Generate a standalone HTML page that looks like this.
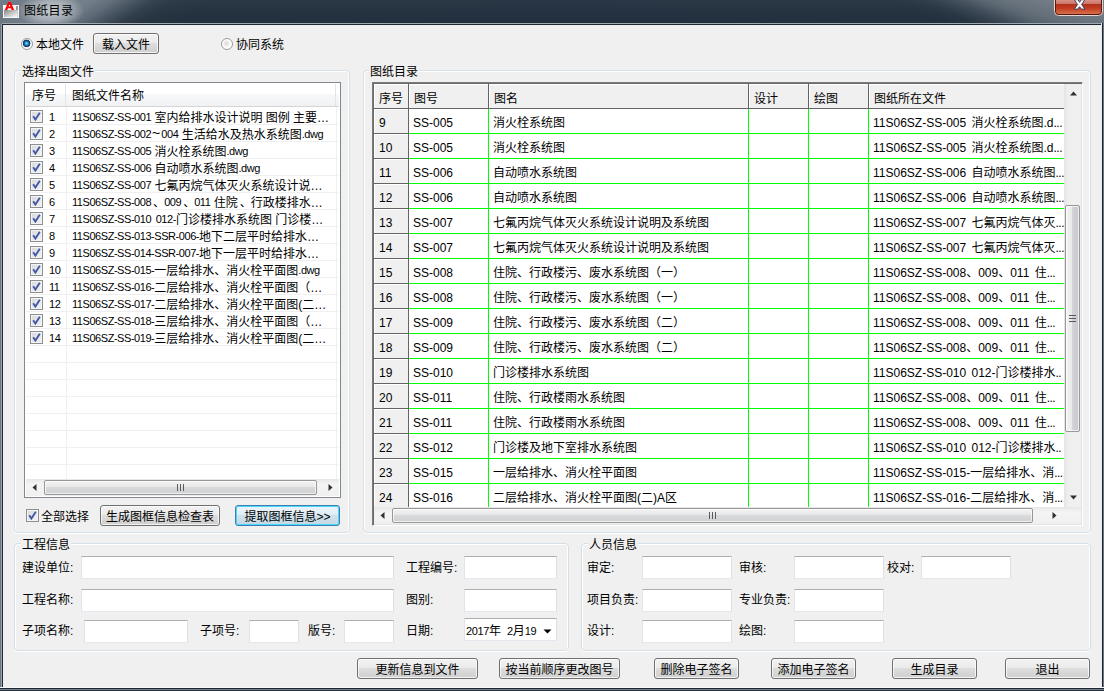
<!DOCTYPE html><html lang="zh-CN"><head><meta charset="utf-8"><title>图纸目录</title><style>
*{box-sizing:border-box;margin:0;padding:0}
html,body{width:1104px;height:691px;overflow:hidden;background:#f0f0f0}
body{position:relative;font-family:"Liberation Sans","Noto Sans CJK SC",sans-serif;font-size:12px;color:#000;line-height:14px}
.a{position:absolute;white-space:nowrap}
#tb{left:0;top:0;width:552px;height:25px;background:linear-gradient(144.8deg,#6c7884 3.01%,#76828d 11.53%,#6c7884 16.29%,#5f6b78 19.19%,#4d5966 21.74%,#3f4c59 23.78%,#303d4a 26.34%,#283542 29.74%,#243240 35.36%,#233140 96.99%)}
#tb2{left:552px;top:0;width:552px;height:25px;background:linear-gradient(23.6deg,#233140 4.69%,#243240 65.75%,#293643 70.01%,#34414e 73.30%,#404c59 75.92%,#4d5965 78.22%,#5a6671 80.85%,#656f7a 84.13%,#6c7781 89.71%,#707b85 95.29%)}
#tbs{left:0;top:0;width:1104px;height:25px;background:linear-gradient(180deg,rgba(255,255,255,.03) 0,rgba(255,255,255,0) 60%,rgba(0,0,0,.04) 100%)}
#fl{left:0;top:24px;width:3px;height:667px;background:linear-gradient(90deg,#6a7681 0,#6a7681 1px,#9da6ae 1px,#9da6ae 2px,#1f2a35 2px)}
#fr{left:1101px;top:23px;width:3px;height:668px;background:linear-gradient(90deg,#e8e8e8 0,#e8e8e8 1px,#1f2730 1px,#1f2730 2px,#6c7680 2px)}
#ft{left:2px;top:23px;width:1100px;height:2px;background:linear-gradient(180deg,#a0a8af 0,#a0a8af 1px,#1f2730 1px)}
#fb{left:0;top:687px;width:1104px;height:4px;background:linear-gradient(180deg,#f8f8f8 0,#f8f8f8 1px,#1c2733 1px,#1c2733 2px,#727e89 2px,#727e89 3px,#27323e 3px)}
#ttl{left:24px;top:4px;font-size:12px;line-height:14px;color:#000;letter-spacing:.3px}
.gb{border:1px solid #d5dfe5;border-radius:4px;box-shadow:inset 1px 1px 0 #fff,inset -1px 0 0 #fff,0 1px 0 #fff}
.gl{background:#f0f0f0;padding:0 1px;line-height:14px}
.btn{border:1px solid #707070;border-radius:3px;background:linear-gradient(180deg,#f2f2f2 0,#ebebeb 45%,#dddddd 50%,#cfcfcf 100%);box-shadow:inset 0 0 0 1px rgba(255,255,255,.75);text-align:center;line-height:19px;height:21px;padding-top:2px}
.btn.def{border-color:#3c7fb1;box-shadow:inset 0 0 0 1px #48d8fb;background:linear-gradient(180deg,#ecf4f9 0,#e0edf5 45%,#d0e1eb 50%,#c4d8e3 100%)}
.in{background:#fff;border:1px solid #e3e9ef;border-top-color:#abadb3;border-left-color:#e2e3ea;border-right-color:#dbdfe6;height:22px}
.lbl{line-height:14px}
.radio{width:12px;height:12px;border-radius:50%;border:1px solid #9b9b9b;background:radial-gradient(circle at 45% 45%,#dddddd 0,#ececec 2.6px,#fdfdfd 3.6px,#fff 5px)}
.radio.on{background:radial-gradient(circle at 46% 44%,#a5e8fa 0,#36aee3 1px,#1f86c4 1.9px,#164872 2.7px,#143c62 3.5px,#f1f1f1 4.1px,#fbfbfb 5px)}
.cb{width:13px;height:13px;border:1px solid #8e8f8f;background:linear-gradient(135deg,#d6d9dc 0,#f3f3f3 100%);box-shadow:inset 0 0 0 1px #f4f4f4}
.cb svg{position:absolute;left:1px;top:1px;width:9px;height:9px}
#lv{left:24px;top:82px;width:317px;height:416px;border:1px solid #828790;background:#fff;overflow:hidden}
#lvh{left:1px;top:1px;width:313px;height:23px;background:linear-gradient(180deg,#fff 0,#fff 45%,#f7f8fa 46%,#f1f2f4 100%);border-bottom:1px solid #d5d5d5}
.lr{left:1px;width:313px;height:17px;border-bottom:1px solid #f0f0f0}
.lt,.ln{font-size:11px;letter-spacing:-.45px}
.lt{position:relative;top:-1px;word-spacing:2px}
.dn{position:relative;left:2px;margin-right:1px}
.tl{font-size:14px;letter-spacing:0;line-height:0;margin:0 1px}
.sbh{background:linear-gradient(180deg,#e6e6e6 0,#f4f4f4 30%,#f0f0f0 100%)}
.thumb{border:1px solid #979797;border-radius:2px;background:linear-gradient(180deg,#f3f3f3 0,#e8e8ea 45%,#d9dadc 50%,#cfd0d3 100%);box-shadow:inset 0 0 0 1px rgba(255,255,255,.7)}
#gr{left:372px;top:82px;width:711px;height:444px;background:#fff;border:1px solid #7c7c7c;border-right-color:#fff;border-bottom-color:#fff;box-shadow:inset 1px 1px 0 #696969,inset -1px -1px 0 #e3e3e3;overflow:hidden}
.gh{background:#f0f0f0;border-right:1px solid #646464;border-bottom:1px solid #646464;box-shadow:inset 1px 1px 0 #fff;font-size:12px;line-height:14px;padding:8px 0 0 5px;height:25px}
.gc{border-right:1px solid #00ff00;border-bottom:1px solid #00ff00;height:25px;font-size:12px;line-height:14px;padding:7px 0 0 4px;overflow:hidden}
.gn{font-size:12px}
.dd{letter-spacing:-.5px}
</style></head><body>
<div class="a" id="tb"></div><div class="a" id="tb2"></div><div class="a" id="tbs"></div>
<div class="a" style="left:18px;top:-6px;width:66px;height:34px;background:radial-gradient(ellipse at center,rgba(255,255,255,.55) 0,rgba(255,255,255,.35) 40%,rgba(255,255,255,0) 72%)"></div>
<svg class="a" style="left:0;top:0" width="22" height="20" viewBox="0 0 22 20"><defs><linearGradient id="ig" x1="0" y1="0" x2="1" y2="1"><stop offset="0" stop-color="#858585"/><stop offset=".55" stop-color="#c9c9c9"/><stop offset="1" stop-color="#fbfbfb"/></linearGradient></defs><rect x="3" y="5" width="16" height="13" fill="#f6f6f6"/><rect x="4" y="10" width="13" height="7" fill="url(#ig)"/><rect x="16" y="6" width="2" height="4" fill="#9a9a9a"/><rect x="17" y="10" width="1" height="7" fill="#d4d4d4"/><path d="M4.8 10 L8.2 1.9 L10.8 1.9 L14.2 10 L11.7 10 L11 8.3 L8 8.3 L7.3 10 Z M8.6 6.6 L10.4 6.6 L9.5 4.1 Z" fill="#ff0000" fill-rule="evenodd"/></svg>
<div class="a" id="ttl">图纸目录</div>
<svg class="a" style="left:1054px;top:0" width="49" height="17" viewBox="0 0 49 17"><defs><linearGradient id="cg" x1="0" y1="0" x2="0" y2="1"><stop offset="0" stop-color="#de9687"/><stop offset=".34" stop-color="#c8756a"/><stop offset=".35" stop-color="#b2301c"/><stop offset=".6" stop-color="#c23a20"/><stop offset="1" stop-color="#d4714c"/></linearGradient></defs><path d="M0.5 -1 L0.5 11.5 Q0.5 15.5 4.5 15.5 L44.5 15.5 Q48.5 15.5 48.5 11.5 L48.5 -1 Z" fill="#5a1a10" stroke="#e4d6d3" stroke-width="1"/><path d="M2 -1 L2 11 Q2 14 5 14 L44 14 Q47 14 47 11 L47 -1 Z" fill="url(#cg)"/><path d="M20.3 -0.3 L23.8 -0.3 L25.6 2.3 L27.4 -0.3 L30.9 -0.3 L27.6 4.5 L30.9 9.1 L27.4 9.1 L25.6 6.7 L23.8 9.1 L20.3 9.1 L23.6 4.5 Z" fill="#fff" stroke="#3e4460" stroke-width="1" stroke-linejoin="round"/></svg>
<div class="a" id="ft"></div><div class="a" id="fl"></div><div class="a" id="fr"></div><div class="a" id="fb"></div>
<div class="a radio on" style="left:21px;top:38px"></div>
<div class="a lbl" style="left:36px;top:38px;">本地文件</div>
<div class="a btn" style="left:93px;top:33px;width:66px">载入文件</div>
<div class="a radio" style="left:221px;top:38px"></div>
<div class="a lbl" style="left:236px;top:38px;">协同系统</div>
<div class="a gb" style="left:14px;top:70px;width:336px;height:463px"></div>
<div class="a gl" style="left:21px;top:65px">选择出图文件</div>
<div class="a gb" style="left:363px;top:70px;width:728px;height:463px"></div>
<div class="a gl" style="left:369px;top:65px">图纸目录</div>
<div class="a gb" style="left:14px;top:543px;width:555px;height:108px"></div>
<div class="a gl" style="left:21px;top:538px">工程信息</div>
<div class="a gb" style="left:581px;top:543px;width:510px;height:108px"></div>
<div class="a gl" style="left:588px;top:538px">人员信息</div>
<div class="a" id="lv">
<div class="a" id="lvh"></div>
<div class="a" style="left:40px;top:1px;width:1px;height:22px;background:#e2e4e9"></div>
<div class="a" style="left:310px;top:1px;width:1px;height:22px;background:#e2e4e9"></div>
<div class="a" style="left:7px;top:6px">序号</div><div class="a" style="left:47px;top:6px">图纸文件名称</div>
<div class="a lr" style="top:25px"></div>
<div class="a lr" style="top:42px"></div>
<div class="a lr" style="top:59px"></div>
<div class="a lr" style="top:76px"></div>
<div class="a lr" style="top:93px"></div>
<div class="a lr" style="top:110px"></div>
<div class="a lr" style="top:127px"></div>
<div class="a lr" style="top:144px"></div>
<div class="a lr" style="top:161px"></div>
<div class="a lr" style="top:178px"></div>
<div class="a lr" style="top:195px"></div>
<div class="a lr" style="top:212px"></div>
<div class="a lr" style="top:229px"></div>
<div class="a lr" style="top:246px"></div>
<div class="a lr" style="top:263px"></div>
<div class="a lr" style="top:280px"></div>
<div class="a lr" style="top:297px"></div>
<div class="a lr" style="top:314px"></div>
<div class="a lr" style="top:331px"></div>
<div class="a lr" style="top:348px"></div>
<div class="a lr" style="top:365px"></div>
<div class="a" style="left:41px;top:24px;width:1px;height:372px;background:#f0f0f0"></div>
<div class="a" style="left:311px;top:24px;width:1px;height:372px;background:#f0f0f0"></div>
<div class="a cb" style="left:5px;top:27px"><svg viewBox="0 0 9 9"><path d="M1.2 4.2 L3.4 7.6 L7.8 0.8" fill="none" stroke="#3f55a6" stroke-width="1.8" stroke-linecap="butt"/></svg></div>
<div class="a ln" style="left:24px;top:27px">1</div>
<div class="a" style="left:47px;top:28px"><span class="lt">11S06SZ-SS-001</span> 室内给排水设计说明 图例 主要…</div>
<div class="a cb" style="left:5px;top:44px"><svg viewBox="0 0 9 9"><path d="M1.2 4.2 L3.4 7.6 L7.8 0.8" fill="none" stroke="#3f55a6" stroke-width="1.8" stroke-linecap="butt"/></svg></div>
<div class="a ln" style="left:24px;top:44px">2</div>
<div class="a" style="left:47px;top:45px"><span class="lt">11S06SZ-SS-002<span class="tl">~</span>004</span> 生活给水及热水系统图<span class="lt">.dwg</span></div>
<div class="a cb" style="left:5px;top:61px"><svg viewBox="0 0 9 9"><path d="M1.2 4.2 L3.4 7.6 L7.8 0.8" fill="none" stroke="#3f55a6" stroke-width="1.8" stroke-linecap="butt"/></svg></div>
<div class="a ln" style="left:24px;top:61px">3</div>
<div class="a" style="left:47px;top:62px"><span class="lt">11S06SZ-SS-005</span> 消火栓系统图<span class="lt">.dwg</span></div>
<div class="a cb" style="left:5px;top:78px"><svg viewBox="0 0 9 9"><path d="M1.2 4.2 L3.4 7.6 L7.8 0.8" fill="none" stroke="#3f55a6" stroke-width="1.8" stroke-linecap="butt"/></svg></div>
<div class="a ln" style="left:24px;top:78px">4</div>
<div class="a" style="left:47px;top:79px"><span class="lt">11S06SZ-SS-006</span> 自动喷水系统图<span class="lt">.dwg</span></div>
<div class="a cb" style="left:5px;top:95px"><svg viewBox="0 0 9 9"><path d="M1.2 4.2 L3.4 7.6 L7.8 0.8" fill="none" stroke="#3f55a6" stroke-width="1.8" stroke-linecap="butt"/></svg></div>
<div class="a ln" style="left:24px;top:95px">5</div>
<div class="a" style="left:47px;top:96px"><span class="lt">11S06SZ-SS-007</span> 七氟丙烷气体灭火系统设计说…</div>
<div class="a cb" style="left:5px;top:112px"><svg viewBox="0 0 9 9"><path d="M1.2 4.2 L3.4 7.6 L7.8 0.8" fill="none" stroke="#3f55a6" stroke-width="1.8" stroke-linecap="butt"/></svg></div>
<div class="a ln" style="left:24px;top:112px">6</div>
<div class="a" style="left:47px;top:113px"><span class="lt">11S06SZ-SS-008</span><span class="dn">、</span><span class="lt">009</span><span class="dn">、</span><span class="lt">011</span> 住院<span class="dn">、</span>行政楼排水…</div>
<div class="a cb" style="left:5px;top:129px"><svg viewBox="0 0 9 9"><path d="M1.2 4.2 L3.4 7.6 L7.8 0.8" fill="none" stroke="#3f55a6" stroke-width="1.8" stroke-linecap="butt"/></svg></div>
<div class="a ln" style="left:24px;top:129px">7</div>
<div class="a" style="left:47px;top:130px"><span class="lt">11S06SZ-SS-010 012-</span>门诊楼排水系统图 门诊楼…</div>
<div class="a cb" style="left:5px;top:146px"><svg viewBox="0 0 9 9"><path d="M1.2 4.2 L3.4 7.6 L7.8 0.8" fill="none" stroke="#3f55a6" stroke-width="1.8" stroke-linecap="butt"/></svg></div>
<div class="a ln" style="left:24px;top:146px">8</div>
<div class="a" style="left:47px;top:147px"><span class="lt">11S06SZ-SS-013-SSR-006-</span>地下二层平时给排水…</div>
<div class="a cb" style="left:5px;top:163px"><svg viewBox="0 0 9 9"><path d="M1.2 4.2 L3.4 7.6 L7.8 0.8" fill="none" stroke="#3f55a6" stroke-width="1.8" stroke-linecap="butt"/></svg></div>
<div class="a ln" style="left:24px;top:163px">9</div>
<div class="a" style="left:47px;top:164px"><span class="lt">11S06SZ-SS-014-SSR-007-</span>地下一层平时给排水…</div>
<div class="a cb" style="left:5px;top:180px"><svg viewBox="0 0 9 9"><path d="M1.2 4.2 L3.4 7.6 L7.8 0.8" fill="none" stroke="#3f55a6" stroke-width="1.8" stroke-linecap="butt"/></svg></div>
<div class="a ln" style="left:24px;top:180px">10</div>
<div class="a" style="left:47px;top:181px"><span class="lt">11S06SZ-SS-015-</span>一层给排水、消火栓平面图<span class="lt">.dwg</span></div>
<div class="a cb" style="left:5px;top:197px"><svg viewBox="0 0 9 9"><path d="M1.2 4.2 L3.4 7.6 L7.8 0.8" fill="none" stroke="#3f55a6" stroke-width="1.8" stroke-linecap="butt"/></svg></div>
<div class="a ln" style="left:24px;top:197px">11</div>
<div class="a" style="left:47px;top:198px"><span class="lt">11S06SZ-SS-016-</span>二层给排水、消火栓平面图（…</div>
<div class="a cb" style="left:5px;top:214px"><svg viewBox="0 0 9 9"><path d="M1.2 4.2 L3.4 7.6 L7.8 0.8" fill="none" stroke="#3f55a6" stroke-width="1.8" stroke-linecap="butt"/></svg></div>
<div class="a ln" style="left:24px;top:214px">12</div>
<div class="a" style="left:47px;top:215px"><span class="lt">11S06SZ-SS-017-</span>二层给排水、消火栓平面图(二…</div>
<div class="a cb" style="left:5px;top:231px"><svg viewBox="0 0 9 9"><path d="M1.2 4.2 L3.4 7.6 L7.8 0.8" fill="none" stroke="#3f55a6" stroke-width="1.8" stroke-linecap="butt"/></svg></div>
<div class="a ln" style="left:24px;top:231px">13</div>
<div class="a" style="left:47px;top:232px"><span class="lt">11S06SZ-SS-018-</span>三层给排水、消火栓平面图（…</div>
<div class="a cb" style="left:5px;top:248px"><svg viewBox="0 0 9 9"><path d="M1.2 4.2 L3.4 7.6 L7.8 0.8" fill="none" stroke="#3f55a6" stroke-width="1.8" stroke-linecap="butt"/></svg></div>
<div class="a ln" style="left:24px;top:248px">14</div>
<div class="a" style="left:47px;top:249px"><span class="lt">11S06SZ-SS-019-</span>三层给排水、消火栓平面图(二…</div>
<div class="a sbh" style="left:1px;top:396px;width:313px;height:17px"></div>
<div class="a thumb" style="left:19px;top:397px;width:273px;height:15px"></div>
<div class="a" style="left:152px;top:401px;width:7px;height:7px;background:repeating-linear-gradient(90deg,#5a5a5a 0,#5a5a5a 1px,transparent 1px,transparent 3px)"></div>
<svg class="a" style="left:7px;top:401px" width="5" height="7" viewBox="0 0 5 7"><path d="M4.5 0 L0.5 3.5 L4.5 7 Z" fill="#303030"/></svg>
<svg class="a" style="left:303px;top:401px" width="5" height="7" viewBox="0 0 5 7"><path d="M0.5 0 L4.5 3.5 L0.5 7 Z" fill="#303030"/></svg>
</div>
<div class="a cb" style="left:26px;top:509px"><svg viewBox="0 0 9 9"><path d="M1.2 4.2 L3.4 7.6 L7.8 0.8" fill="none" stroke="#3f55a6" stroke-width="1.8" stroke-linecap="butt"/></svg></div>
<div class="a lbl" style="left:41px;top:510px;">全部选择</div>
<div class="a btn" style="left:100px;top:505px;width:120px">生成图框信息检查表</div>
<div class="a btn def" style="left:235px;top:505px;width:105px">提取图框信息&gt;&gt;</div>
<div class="a" id="gr">
<div class="a gh" style="left:1px;top:1px;width:35px">序号</div>
<div class="a gh" style="left:36px;top:1px;width:80px">图号</div>
<div class="a gh" style="left:116px;top:1px;width:260px">图名</div>
<div class="a gh" style="left:376px;top:1px;width:60px">设计</div>
<div class="a gh" style="left:436px;top:1px;width:60px">绘图</div>
<div class="a gh" style="left:496px;top:1px;width:195px;border-right:0">图纸所在文件</div>
<div class="a gh gn" style="left:1px;top:26px;width:35px;padding-top:7px">9</div>
<div class="a gc" style="left:36px;top:26px;width:80px">SS-005</div>
<div class="a gc" style="left:116px;top:26px;width:260px;padding-left:4px">消火栓系统图</div>
<div class="a gc" style="left:376px;top:26px;width:60px"></div>
<div class="a gc" style="left:436px;top:26px;width:60px"></div>
<div class="a gc" style="left:496px;top:26px;width:195px;border-right:0;word-spacing:2px">11S06SZ-SS-005 消火栓系统图.d<span class="dd">...</span></div>
<div class="a gh gn" style="left:1px;top:51px;width:35px;padding-top:7px">10</div>
<div class="a gc" style="left:36px;top:51px;width:80px">SS-005</div>
<div class="a gc" style="left:116px;top:51px;width:260px;padding-left:4px">消火栓系统图</div>
<div class="a gc" style="left:376px;top:51px;width:60px"></div>
<div class="a gc" style="left:436px;top:51px;width:60px"></div>
<div class="a gc" style="left:496px;top:51px;width:195px;border-right:0;word-spacing:2px">11S06SZ-SS-005 消火栓系统图.d<span class="dd">...</span></div>
<div class="a gh gn" style="left:1px;top:76px;width:35px;padding-top:7px">11</div>
<div class="a gc" style="left:36px;top:76px;width:80px">SS-006</div>
<div class="a gc" style="left:116px;top:76px;width:260px;padding-left:4px">自动喷水系统图</div>
<div class="a gc" style="left:376px;top:76px;width:60px"></div>
<div class="a gc" style="left:436px;top:76px;width:60px"></div>
<div class="a gc" style="left:496px;top:76px;width:195px;border-right:0;word-spacing:2px">11S06SZ-SS-006 自动喷水系统图<span class="dd">...</span></div>
<div class="a gh gn" style="left:1px;top:101px;width:35px;padding-top:7px">12</div>
<div class="a gc" style="left:36px;top:101px;width:80px">SS-006</div>
<div class="a gc" style="left:116px;top:101px;width:260px;padding-left:4px">自动喷水系统图</div>
<div class="a gc" style="left:376px;top:101px;width:60px"></div>
<div class="a gc" style="left:436px;top:101px;width:60px"></div>
<div class="a gc" style="left:496px;top:101px;width:195px;border-right:0;word-spacing:2px">11S06SZ-SS-006 自动喷水系统图<span class="dd">...</span></div>
<div class="a gh gn" style="left:1px;top:126px;width:35px;padding-top:7px">13</div>
<div class="a gc" style="left:36px;top:126px;width:80px">SS-007</div>
<div class="a gc" style="left:116px;top:126px;width:260px;padding-left:4px">七氟丙烷气体灭火系统设计说明及系统图</div>
<div class="a gc" style="left:376px;top:126px;width:60px"></div>
<div class="a gc" style="left:436px;top:126px;width:60px"></div>
<div class="a gc" style="left:496px;top:126px;width:195px;border-right:0;word-spacing:2px">11S06SZ-SS-007 七氟丙烷气体灭<span class="dd">...</span></div>
<div class="a gh gn" style="left:1px;top:151px;width:35px;padding-top:7px">14</div>
<div class="a gc" style="left:36px;top:151px;width:80px">SS-007</div>
<div class="a gc" style="left:116px;top:151px;width:260px;padding-left:4px">七氟丙烷气体灭火系统设计说明及系统图</div>
<div class="a gc" style="left:376px;top:151px;width:60px"></div>
<div class="a gc" style="left:436px;top:151px;width:60px"></div>
<div class="a gc" style="left:496px;top:151px;width:195px;border-right:0;word-spacing:2px">11S06SZ-SS-007 七氟丙烷气体灭<span class="dd">...</span></div>
<div class="a gh gn" style="left:1px;top:176px;width:35px;padding-top:7px">15</div>
<div class="a gc" style="left:36px;top:176px;width:80px">SS-008</div>
<div class="a gc" style="left:116px;top:176px;width:260px;padding-left:4px">住院、行政楼污、废水系统图（一）</div>
<div class="a gc" style="left:376px;top:176px;width:60px"></div>
<div class="a gc" style="left:436px;top:176px;width:60px"></div>
<div class="a gc" style="left:496px;top:176px;width:195px;border-right:0;word-spacing:2px">11S06SZ-SS-008、009、011 住<span class="dd">...</span></div>
<div class="a gh gn" style="left:1px;top:201px;width:35px;padding-top:7px">16</div>
<div class="a gc" style="left:36px;top:201px;width:80px">SS-008</div>
<div class="a gc" style="left:116px;top:201px;width:260px;padding-left:4px">住院、行政楼污、废水系统图（一）</div>
<div class="a gc" style="left:376px;top:201px;width:60px"></div>
<div class="a gc" style="left:436px;top:201px;width:60px"></div>
<div class="a gc" style="left:496px;top:201px;width:195px;border-right:0;word-spacing:2px">11S06SZ-SS-008、009、011 住<span class="dd">...</span></div>
<div class="a gh gn" style="left:1px;top:226px;width:35px;padding-top:7px">17</div>
<div class="a gc" style="left:36px;top:226px;width:80px">SS-009</div>
<div class="a gc" style="left:116px;top:226px;width:260px;padding-left:4px">住院、行政楼污、废水系统图（二）</div>
<div class="a gc" style="left:376px;top:226px;width:60px"></div>
<div class="a gc" style="left:436px;top:226px;width:60px"></div>
<div class="a gc" style="left:496px;top:226px;width:195px;border-right:0;word-spacing:2px">11S06SZ-SS-008、009、011 住<span class="dd">...</span></div>
<div class="a gh gn" style="left:1px;top:251px;width:35px;padding-top:7px">18</div>
<div class="a gc" style="left:36px;top:251px;width:80px">SS-009</div>
<div class="a gc" style="left:116px;top:251px;width:260px;padding-left:4px">住院、行政楼污、废水系统图（二）</div>
<div class="a gc" style="left:376px;top:251px;width:60px"></div>
<div class="a gc" style="left:436px;top:251px;width:60px"></div>
<div class="a gc" style="left:496px;top:251px;width:195px;border-right:0;word-spacing:2px">11S06SZ-SS-008、009、011 住<span class="dd">...</span></div>
<div class="a gh gn" style="left:1px;top:276px;width:35px;padding-top:7px">19</div>
<div class="a gc" style="left:36px;top:276px;width:80px">SS-010</div>
<div class="a gc" style="left:116px;top:276px;width:260px;padding-left:4px">门诊楼排水系统图</div>
<div class="a gc" style="left:376px;top:276px;width:60px"></div>
<div class="a gc" style="left:436px;top:276px;width:60px"></div>
<div class="a gc" style="left:496px;top:276px;width:195px;border-right:0;word-spacing:2px">11S06SZ-SS-010 012-门诊楼排水<span class="dd">..</span></div>
<div class="a gh gn" style="left:1px;top:301px;width:35px;padding-top:7px">20</div>
<div class="a gc" style="left:36px;top:301px;width:80px">SS-011</div>
<div class="a gc" style="left:116px;top:301px;width:260px;padding-left:4px">住院、行政楼雨水系统图</div>
<div class="a gc" style="left:376px;top:301px;width:60px"></div>
<div class="a gc" style="left:436px;top:301px;width:60px"></div>
<div class="a gc" style="left:496px;top:301px;width:195px;border-right:0;word-spacing:2px">11S06SZ-SS-008、009、011 住<span class="dd">...</span></div>
<div class="a gh gn" style="left:1px;top:326px;width:35px;padding-top:7px">21</div>
<div class="a gc" style="left:36px;top:326px;width:80px">SS-011</div>
<div class="a gc" style="left:116px;top:326px;width:260px;padding-left:4px">住院、行政楼雨水系统图</div>
<div class="a gc" style="left:376px;top:326px;width:60px"></div>
<div class="a gc" style="left:436px;top:326px;width:60px"></div>
<div class="a gc" style="left:496px;top:326px;width:195px;border-right:0;word-spacing:2px">11S06SZ-SS-008、009、011 住<span class="dd">...</span></div>
<div class="a gh gn" style="left:1px;top:351px;width:35px;padding-top:7px">22</div>
<div class="a gc" style="left:36px;top:351px;width:80px">SS-012</div>
<div class="a gc" style="left:116px;top:351px;width:260px;padding-left:4px">门诊楼及地下室排水系统图</div>
<div class="a gc" style="left:376px;top:351px;width:60px"></div>
<div class="a gc" style="left:436px;top:351px;width:60px"></div>
<div class="a gc" style="left:496px;top:351px;width:195px;border-right:0;word-spacing:2px">11S06SZ-SS-010 012-门诊楼排水<span class="dd">..</span></div>
<div class="a gh gn" style="left:1px;top:376px;width:35px;padding-top:7px">23</div>
<div class="a gc" style="left:36px;top:376px;width:80px">SS-015</div>
<div class="a gc" style="left:116px;top:376px;width:260px;padding-left:4px">一层给排水、消火栓平面图</div>
<div class="a gc" style="left:376px;top:376px;width:60px"></div>
<div class="a gc" style="left:436px;top:376px;width:60px"></div>
<div class="a gc" style="left:496px;top:376px;width:195px;border-right:0;word-spacing:2px">11S06SZ-SS-015-一层给排水、消<span class="dd">...</span></div>
<div class="a gh gn" style="left:1px;top:401px;width:35px;padding-top:7px">24</div>
<div class="a gc" style="left:36px;top:401px;width:80px">SS-016</div>
<div class="a gc" style="left:116px;top:401px;width:260px;padding-left:4px">二层给排水、消火栓平面图(二)A区</div>
<div class="a gc" style="left:376px;top:401px;width:60px"></div>
<div class="a gc" style="left:436px;top:401px;width:60px"></div>
<div class="a gc" style="left:496px;top:401px;width:195px;border-right:0;word-spacing:2px">11S06SZ-SS-016-二层给排水、消<span class="dd">...</span></div>
<div class="a" style="left:691px;top:1px;width:17px;height:423px;background:linear-gradient(90deg,#e4e4e4 0,#efefef 25%,#f0f0f0 100%)"></div>
<div class="a thumb" style="left:692px;top:122px;width:15px;height:227px;background:linear-gradient(90deg,#f4f4f4 0,#e9e9eb 45%,#d4d4d8 50%,#c8c8cc 100%)"></div>
<div class="a" style="left:696px;top:232px;width:7px;height:7px;background:repeating-linear-gradient(180deg,#5a5a5a 0,#5a5a5a 1px,transparent 1px,transparent 3px)"></div>
<svg class="a" style="left:697px;top:8px" width="7" height="5" viewBox="0 0 7 5"><path d="M0 4.5 L3.5 0.5 L7 4.5 Z" fill="#303030"/></svg>
<svg class="a" style="left:697px;top:412px" width="7" height="5" viewBox="0 0 7 5"><path d="M0 0.5 L3.5 4.5 L7 0.5 Z" fill="#303030"/></svg>
<div class="a sbh" style="left:1px;top:424px;width:707px;height:17px"></div>
<div class="a thumb" style="left:19px;top:425px;width:641px;height:15px"></div>
<div class="a" style="left:336px;top:429px;width:7px;height:7px;background:repeating-linear-gradient(90deg,#5a5a5a 0,#5a5a5a 1px,transparent 1px,transparent 3px)"></div>
<svg class="a" style="left:7px;top:429px" width="5" height="7" viewBox="0 0 5 7"><path d="M4.5 0 L0.5 3.5 L4.5 7 Z" fill="#303030"/></svg>
<svg class="a" style="left:679px;top:429px" width="5" height="7" viewBox="0 0 5 7"><path d="M0.5 0 L4.5 3.5 L0.5 7 Z" fill="#303030"/></svg>
</div>
<div class="a lbl" style="left:22px;top:561px;">建设单位:</div>
<div class="a in" style="left:81px;top:556px;width:313px;height:23px"></div>
<div class="a lbl" style="left:406px;top:561px;">工程编号:</div>
<div class="a in" style="left:464px;top:556px;width:93px;height:23px"></div>
<div class="a lbl" style="left:22px;top:593px;">工程名称:</div>
<div class="a in" style="left:81px;top:589px;width:313px;height:23px"></div>
<div class="a lbl" style="left:406px;top:593px;">图别:</div>
<div class="a in" style="left:464px;top:589px;width:93px;height:23px"></div>
<div class="a lbl" style="left:22px;top:624px;">子项名称:</div>
<div class="a in" style="left:84px;top:620px;width:104px;height:23px"></div>
<div class="a lbl" style="left:200px;top:624px;">子项号:</div>
<div class="a in" style="left:249px;top:620px;width:50px;height:23px"></div>
<div class="a lbl" style="left:308px;top:624px;">版号:</div>
<div class="a in" style="left:344px;top:620px;width:50px;height:23px"></div>
<div class="a lbl" style="left:406px;top:624px;">日期:</div>
<div class="a in" style="left:464px;top:618px;width:93px;height:23px"></div>
<div class="a" style="left:466px;top:624px;font-size:11px;line-height:14px"><span style="letter-spacing:-.4px">2017</span><span style="font-size:12px">年</span>&nbsp; <span style="letter-spacing:-.4px">2</span><span style="font-size:12px">月</span><span style="letter-spacing:-.4px">19</span></div>
<svg class="a" style="left:543px;top:629px" width="9" height="5" viewBox="0 0 9 5"><path d="M0.5 0.5 L4.5 4.5 L8.5 0.5 Z" fill="#000"/></svg>
<div class="a lbl" style="left:587px;top:561px;">审定:</div>
<div class="a in" style="left:642px;top:556px;width:90px;height:23px"></div>
<div class="a lbl" style="left:739px;top:561px;">审核:</div>
<div class="a in" style="left:794px;top:556px;width:90px;height:23px"></div>
<div class="a lbl" style="left:887px;top:561px;">校对:</div>
<div class="a in" style="left:921px;top:556px;width:90px;height:23px"></div>
<div class="a lbl" style="left:587px;top:593px;">项目负责:</div>
<div class="a in" style="left:642px;top:589px;width:90px;height:23px"></div>
<div class="a lbl" style="left:739px;top:593px;">专业负责:</div>
<div class="a in" style="left:794px;top:589px;width:90px;height:23px"></div>
<div class="a lbl" style="left:587px;top:624px;">设计:</div>
<div class="a in" style="left:642px;top:620px;width:90px;height:23px"></div>
<div class="a lbl" style="left:739px;top:624px;">绘图:</div>
<div class="a in" style="left:794px;top:620px;width:90px;height:23px"></div>
<div class="a btn" style="left:357px;top:658px;width:121px">更新信息到文件</div>
<div class="a btn" style="left:499px;top:658px;width:121px">按当前顺序更改图号</div>
<div class="a btn" style="left:654px;top:658px;width:85px">删除电子签名</div>
<div class="a btn" style="left:771px;top:658px;width:85px">添加电子签名</div>
<div class="a btn" style="left:892px;top:658px;width:85px">生成目录</div>
<div class="a btn" style="left:1005px;top:658px;width:85px">退出</div>
</body></html>
